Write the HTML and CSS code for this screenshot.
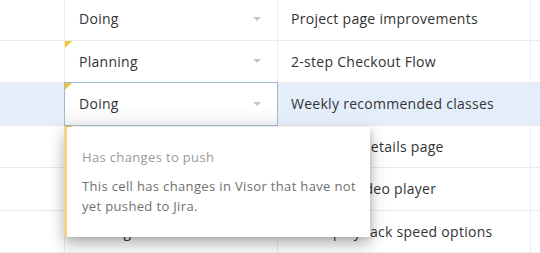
FILE: index.html
```html
<!DOCTYPE html>
<html lang="en">
<head>
  <meta charset="utf-8">
  <title>Grid</title>
  <link rel="stylesheet" href="styles.css">
</head>
<body>
  <div class="sheet">
    <div class="row">
      <div class="cell gutter"></div>
      <div class="cell status"><span>Doing</span><i class="caret"></i></div>
      <div class="cell title">Project page improvements</div>
      <div class="cell end"></div>
    </div>
    <div class="row">
      <div class="cell gutter"></div>
      <div class="cell status changed"><span>Planning</span><i class="caret"></i></div>
      <div class="cell title">2-step Checkout Flow</div>
      <div class="cell end"></div>
    </div>
    <div class="row selected">
      <div class="cell gutter"></div>
      <div class="cell status changed editing"><span>Doing</span><i class="caret"></i></div>
      <div class="cell title">Weekly recommended classes</div>
      <div class="cell end"></div>
    </div>
    <div class="row">
      <div class="cell gutter"></div>
      <div class="cell status changed"><span>Planning</span><i class="caret"></i></div>
      <div class="cell title">Instructor details page</div>
      <div class="cell end"></div>
    </div>
    <div class="row">
      <div class="cell gutter"></div>
      <div class="cell status"><span>Doing</span><i class="caret"></i></div>
      <div class="cell title">Updated video player</div>
      <div class="cell end"></div>
    </div>
    <div class="row">
      <div class="cell gutter"></div>
      <div class="cell status"><span>Backlog</span><i class="caret"></i></div>
      <div class="cell title">Video playback speed options</div>
      <div class="cell end"></div>
    </div>

    <!-- 提示框 -->
    <div class="popover">
      <div class="pop-title">Has changes to push</div>
      <p class="pop-text">This cell has changes in Visor that have not yet pushed to Jira.</p>
    </div>
  </div>
</body>
</html>
```

FILE: styles.css
```css
* {
  margin: 0;
  padding: 0;
  box-sizing: border-box;
}
body {
  background: #fff;
  font-family: "Open Sans", "Noto Sans", sans-serif;
  color: #333;
  overflow: hidden;
}
.sheet {
  position: relative;
  margin-top: -2px;
}
.row {
  display: grid;
  grid-template-columns: 65px 213px 253px 1fr;
  height: 42.5px;
  border-bottom: 1px solid #ebebeb;
}
.row.selected {
  background: #e4eefb;
}
.cell {
  display: flex;
  align-items: center;
  border-right: 1px solid #ebebeb;
  font-size: 14px;
  letter-spacing: 0.28px;
  position: relative;
  white-space: nowrap;
}
.cell.end {
  border-right: none;
}
.status {
  padding: 0 14px 0 14px;
  justify-content: space-between;
  background: #fff;
}
.status .caret {
  width: 0;
  height: 0;
  border-left: 4px solid transparent;
  border-right: 4px solid transparent;
  border-top: 4px solid #c4c4c4;
  margin-right: 2px;
}
.title {
  padding-left: 13px;
  background: #fff;
}
.selected .title,
.selected .gutter {
  background: transparent;
}
.status.changed::before {
  content: "";
  position: absolute;
  left: 0;
  top: 0;
  border-top: 7px solid #f2c53d;
  border-right: 7px solid transparent;
}
.status.editing {
  margin: -1px 0 -1px -1px;
  border: 1px solid #9cbccb;
  background: linear-gradient(#fff 55%, #f3f3f3);
  padding-left: 14px;
}
.popover {
  position: absolute;
  left: 64px;
  top: 129px;
  width: 306px;
  height: 110px;
  background: #fff;
  border-left: 3px solid #f0d389;
  padding: 20px 10px 0 15px;
  box-shadow: 0 7px 15px rgba(0, 0, 0, 0.3), 2px 2px 4px rgba(0, 0, 0, 0.08);
  z-index: 5;
}
.pop-title {
  font-size: 13px;
  letter-spacing: 0.35px;
  color: #999;
  line-height: 20px;
}
.pop-text {
  margin-top: 9px;
  font-size: 13px;
  letter-spacing: 0.35px;
  line-height: 20px;
  color: #707070;
}
```
